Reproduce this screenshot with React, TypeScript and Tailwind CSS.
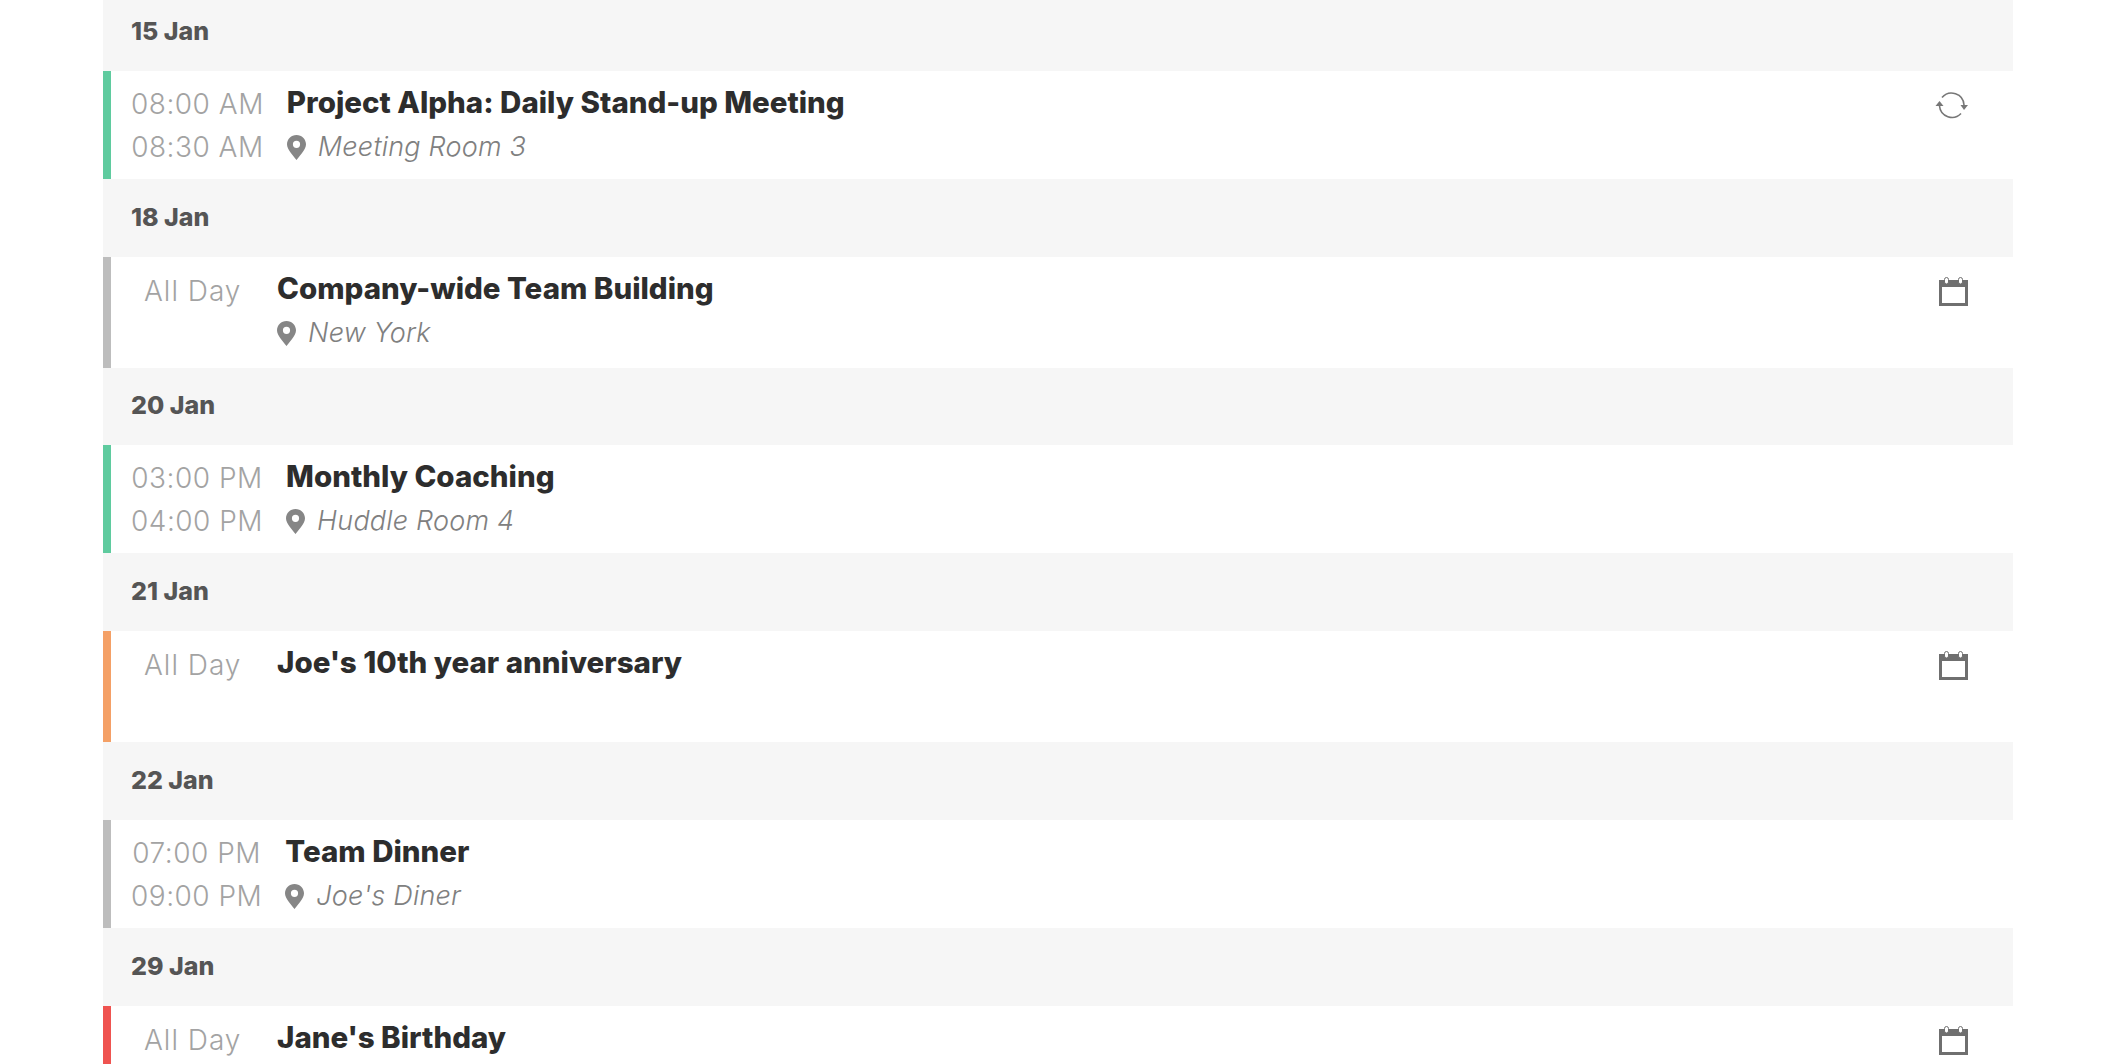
import React from "react";

const Pin = () => (
  <svg width="19" height="25" viewBox="0 0 19 25" className="shrink-0">
    <path fillRule="evenodd" fill="#868686" d="M9.500 0C4.200 0 0 4.100 0 9.300C0 14.500 5.900 20.300 9.500 25C13.100 20.300 19 14.500 19 9.300C19 4.100 14.800 0 9.500 0ZM9.500 5.700A3.600 3.600 0 1 1 9.500 12.900A3.600 3.600 0 1 1 9.500 5.700Z" />
  </svg>
);

const Sync = () => (
  <svg width="33" height="27" viewBox="0 0 33 27" fill="none" className="shrink-0">
    <path d="M7 5.500A12.500 12.500 0 0 1 29 13" stroke="#777" strokeWidth="1.600" />
    <path d="M4.500 14A12.500 12.500 0 0 0 26 21.500" stroke="#777" strokeWidth="1.600" />
    <path d="M0.500 14L4.500 9L8.500 14Z" fill="#777" />
    <path d="M25.500 13L29 18L33 13Z" fill="#777" />
  </svg>
);

const Cal = () => (
  <svg width="29" height="29" viewBox="0 0 29 29" className="shrink-0">
    <path fill="#6f6f6f" d="M0 3H29V29H0Z" />
    <path fill="#fff" d="M3 10H26V26H3Z" />
    <rect x="5.500" y="0.500" width="4" height="6.500" rx="2" fill="#fff" stroke="#6f6f6f" strokeWidth="1" />
    <rect x="19.500" y="0.500" width="4" height="6.500" rx="2" fill="#fff" stroke="#6f6f6f" strokeWidth="1" />
  </svg>
);

type Ev = {
  date: string; bar: string; start?: string; end?: string; title: string; loc?: string; icon?: "sync" | "cal"; h: string; hh: string;
};

const events: Ev[] = [
  { date: "15 Jan", hh: "h-[71px]", h: "h-[108px]", bar: "border-[#5fcb9f]", start: "08:00 AM", end: "08:30 AM", title: "Project Alpha: Daily Stand-up Meeting", loc: "Meeting Room 3", icon: "sync" },
  { date: "18 Jan", hh: "h-[78px]", h: "h-[111px]", bar: "border-[#bdbdbd]", title: "Company-wide Team Building", loc: "New York", icon: "cal" },
  { date: "20 Jan", hh: "h-[77px]", h: "h-[108px]", bar: "border-[#5fcb9f]", start: "03:00 PM", end: "04:00 PM", title: "Monthly Coaching", loc: "Huddle Room 4" },
  { date: "21 Jan", hh: "h-[78px]", h: "h-[111px]", bar: "border-[#f4a066]", title: "Joe's 10th year anniversary", icon: "cal" },
  { date: "22 Jan", hh: "h-[78px]", h: "h-[108px]", bar: "border-[#bdbdbd]", start: "07:00 PM", end: "09:00 PM", title: "Team Dinner", loc: "Joe's Diner" },
  { date: "29 Jan", hh: "h-[78px]", h: "h-[111px]", bar: "border-[#ef5350]", title: "Jane's Birthday", icon: "cal" },
];

export default function App() {
  return (
    <div className="h-[1064px] overflow-hidden bg-white pl-[103px] pr-[109px] font-['Inter','Liberation_Sans',sans-serif]">
      {events.map((e) => (
        <div key={e.date}>
          <div className={`${e.hh} flex items-end bg-[#f6f6f6] pl-[28px] pb-[25px]`}>
            <span className="text-[25px] leading-[30px] font-extrabold text-[#555]">{e.date}</span>
          </div>
          <div className={`${e.h} flex border-l-8 bg-white pt-[10px] ${e.bar}`}>
            {e.start ? (
              <div className="mt-[2px] flex shrink-0 flex-col items-center pl-[20px] pr-[23px] text-[28px] leading-[43px] font-light tracking-[0.5px] text-[#a3a3a3]">
                <span>{e.start}</span>
                <span>{e.end}</span>
              </div>
            ) : (
              <div className="mt-[3px] w-[166px] shrink-0 pl-[33px] text-[28px] leading-[43px] font-light tracking-[1px] text-[#a3a3a3]">
                All Day
              </div>
            )}
            <div className="flex flex-1 flex-col">
              <div className="text-[29.5px] leading-[42px] font-extrabold text-[#2d2d2d]">{e.title}</div>
              {e.loc && (
                <div className="mt-[3px] flex items-center gap-[12px] text-[27px] leading-[42px] font-light italic tracking-[0.2px] text-[#808080]">
                  <Pin />
                  <span>{e.loc}</span>
                </div>
              )}
            </div>
            <div className="flex w-[79px] shrink-0 justify-start">
              {e.icon === "sync" && (
                <div className="pl-[1px] pt-[11px]">
                  <Sync />
                </div>
              )}
              {e.icon === "cal" && (
                <div className="pl-[5px] pt-[10px]">
                  <Cal />
                </div>
              )}
            </div>
          </div>
        </div>
      ))}
    </div>
  );
}
